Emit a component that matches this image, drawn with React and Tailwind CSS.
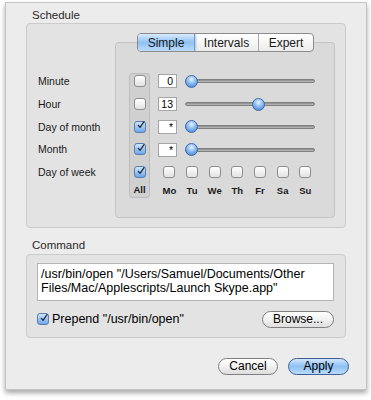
import React from 'react';

const font = { fontFamily: '"Liberation Sans", Arial, sans-serif' };

const Check = ({ checked }) => (
  <div
    className={`w-[12px] h-[12px] rounded-[3px] border flex items-center justify-center ${
      checked
        ? 'border-[#5a7fae] bg-gradient-to-b from-[#cfe4fb] to-[#6fa6e6]'
        : 'border-[#8e8e8e] bg-gradient-to-b from-[#ffffff] to-[#e2e2e2]'
    }`}
  >
    {checked && (
      <svg width="12" height="12" viewBox="0 0 12 12" className="-mt-[3px] ml-[2px]">
        <path d="M2 6.5 L4.6 9.5 L10.5 1" fill="none" stroke="#1d2a3e" strokeWidth="1.9" strokeLinecap="round" strokeLinejoin="round" />
      </svg>
    )}
  </div>
);

const Slider = ({ pos }) => (
  <div className="relative w-[130px] h-[13px] flex items-center">
    <div className="w-full h-[4px] rounded-full bg-gradient-to-b from-[#8a8a8a] to-[#bdbdbd] border border-[#808080]" />
    <div
      className="absolute top-0 w-[13px] h-[13px] rounded-full border border-[#3f6aa8] bg-[radial-gradient(circle_at_50%_30%,#e6f2ff_0%,#8cbcf1_45%,#3a7ad4_100%)]"
      style={{ left: pos }}
    />
  </div>
);

const Field = ({ value }) => (
  <div className="w-[19px] h-[14px] bg-white border border-[#a5a5a5] text-[10.5px] leading-[12px] text-right pr-[3px] text-black">
    {value}
  </div>
);

const Button = ({ label, primary, width }) => (
  <div
    className={`h-[17px] rounded-full border flex items-center justify-center text-[12px] text-black ${
      primary
        ? 'border-[#3f5f93] bg-gradient-to-b from-[#cfe6ff] via-[#8fc0f3] to-[#b9dcff]'
        : 'border-[#7f7f7f] bg-gradient-to-b from-[#ffffff] via-[#f1f1f1] to-[#dedede]'
    }`}
    style={{ width }}
  >
    {label}
  </div>
);

const rows = [
  { label: 'Minute', checked: false, value: '0', pos: 0 },
  { label: 'Hour', checked: false, value: '13', pos: 67 },
  { label: 'Day of month', checked: true, value: '*', pos: 0 },
  { label: 'Month', checked: true, value: '*', pos: 0 },
];

const days = ['Mo', 'Tu', 'We', 'Th', 'Fr', 'Sa', 'Su'];

export default function App() {
  return (
    <div className="w-[371px] h-[400px] bg-white pt-[2px] pl-[5px]" style={font}>
      <div className="w-[362px] h-[388px] bg-[#ececec] border border-[#c4c4c4] shadow-[0_3px_5px_rgba(0,0,0,0.35)] pl-[20px] pt-[6px] text-[#1a1a1a]">
        {/* Schedule */}
        <div className="pl-[6px] text-[11.5px] leading-[13px] text-[#2a2a2a]">Schedule</div>
        <div className="mt-[1px] w-[320px] h-[205px] rounded-[4px] border border-[#cbcbcb] bg-[#e3e3e3] flex">
          <div className="w-[88px] pl-[11px] pt-[46.5px] text-[10.5px]">
            {[...rows, { label: 'Day of week' }].map((r) => (
              <div key={r.label} className="h-[22.75px] flex items-center">{r.label}</div>
            ))}
          </div>
          <div className="relative mt-[18px] w-[220px] h-[176px] rounded-[4px] border border-[#c4c4c4] bg-[#dadada]">
            <div className="absolute -top-[10px] left-[21px] flex h-[19px] rounded-[4px] border border-[#8c8c8c] bg-gradient-to-b from-[#ffffff] to-[#ececec] text-[12px] overflow-hidden">
              <div className="w-[57px] flex items-center justify-center border-r border-[#7c98c3] bg-gradient-to-b from-[#d9ebfd] via-[#8fc1f3] to-[#bcdcfd] shadow-[0_0_3px_#5c97e0]">Simple</div>
              <div className="w-[64px] flex items-center justify-center border-r border-[#a8a8a8]">Intervals</div>
              <div className="w-[54px] flex items-center justify-center">Expert</div>
            </div>
            <div className="flex items-start pl-[13px] pt-[27px]">
              <div className="mt-[3px] w-[21px] h-[125px] rounded-[3px] border border-[#bdbdbd] bg-[#d0d0d0] flex flex-col items-center pt-[1px]">
                {[false, false, true, true].map((c, i) => (
                  <div key={i} className="h-[22.75px] flex items-start"><Check checked={c} /></div>
                ))}
                <Check checked />
                <div className="text-[9.5px] font-bold mt-[6px] leading-[12px]">All</div>
              </div>
              <div className="pl-[8px]">
                {rows.map((r) => (
                  <div key={r.label} className="h-[22.75px] flex items-center">
                    <Field value={r.value} />
                    <div className="ml-[8px]"><Slider pos={r.pos} /></div>
                  </div>
                ))}
                <div className="flex">
                  {days.map((d) => (
                    <div key={d} className="w-[22.67px] flex flex-col items-center">
                      <div className="h-[22.75px] flex items-center"><Check /></div>
                      <div className="text-[9.5px] font-bold mt-[1.5px] leading-[12px]">{d}</div>
                    </div>
                  ))}
                </div>
              </div>
            </div>
          </div>
        </div>

        {/* Command */}
        <div className="mt-[11px] pl-[6px] text-[11.5px] leading-[13px] text-[#2a2a2a]">Command</div>
        <div className="mt-[1.5px] w-[320px] h-[84px] rounded-[4px] border border-[#cbcbcb] bg-[#e3e3e3] pt-[8px] pl-[10px]">
          <div className="w-[297px] h-[38px] bg-white border border-[#b5b5b5] pl-[3px] pt-[3px] text-[12.5px] leading-[14px] text-black">
            /usr/bin/open "/Users/Samuel/Documents/Other Files/Mac/Applescripts/Launch Skype.app"
          </div>
          <div className="mt-[9.5px] flex items-center pr-[11px]">
            <Check checked />
            <span className="ml-[3px] text-[12.5px] text-black">Prepend "/usr/bin/open"</span>
            <div className="ml-auto"><Button label="Browse..." width={72} /></div>
          </div>
        </div>

        <div className="mt-[20px] flex justify-end gap-[10px] pr-[17px]">
          <Button label="Cancel" width={60} />
          <Button label="Apply" primary width={61} />
        </div>
      </div>
    </div>
  );
}
